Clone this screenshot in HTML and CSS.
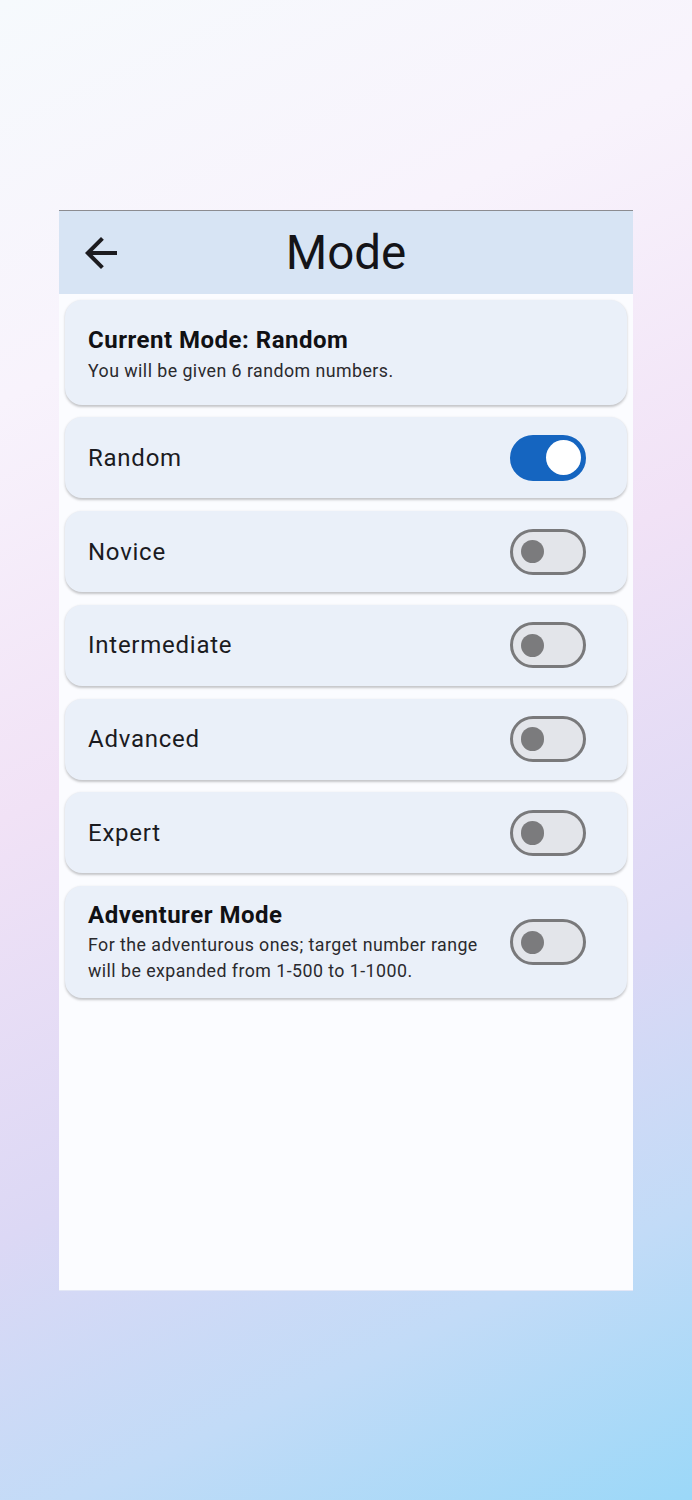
FILE: index.html
```html
<!DOCTYPE html>
<html lang="en">
<head>
<meta charset="utf-8">
<title>Mode</title>
<link rel="stylesheet" href="styles.css">
</head>
<body>
<div class="phone">
  <header class="appbar">
    <button class="back" aria-label="Back">
      <svg viewBox="0 0 24 24" width="48" height="48"><path d="M20 11H7.83l5.59-5.59L12 4l-8 8 8 8 1.41-1.41L7.83 13H20v-2z" fill="#1c1b1f"/></svg>
    </button>
    <h1 class="title">Mode</h1>
    <span></span>
  </header>
  <main class="list">
    <section class="card current">
      <div class="card-title">Current Mode: Random</div>
      <div class="card-sub">You will be given 6 random numbers.</div>
    </section>
    <section class="card row">
      <span class="label">Random</span>
      <span class="switch on"><span class="thumb"></span></span>
    </section>
    <section class="card row">
      <span class="label">Novice</span>
      <span class="switch"><span class="thumb"></span></span>
    </section>
    <section class="card row">
      <span class="label">Intermediate</span>
      <span class="switch"><span class="thumb"></span></span>
    </section>
    <section class="card row">
      <span class="label">Advanced</span>
      <span class="switch"><span class="thumb"></span></span>
    </section>
    <section class="card row">
      <span class="label">Expert</span>
      <span class="switch"><span class="thumb"></span></span>
    </section>
    <section class="card row adv">
      <div class="adv-text">
        <div class="card-title">Adventurer Mode</div>
        <div class="card-sub">For the adventurous ones; target number range will be expanded from 1-500 to 1-1000.</div>
      </div>
      <span class="switch"><span class="thumb"></span></span>
    </section>
  </main>
</div>
</body>
</html>
```
FILE: styles.css
```css
html, body {
  margin: 0;
  padding: 0;
}
body {
  width: 692px;
  min-height: 1500px;
  background: linear-gradient(155deg, #f6fafd 0%, #f8f3fc 22%, #f1e2f6 45%, #dcd8f5 68%, #c2dbf7 84%, #9bd8f8 100%);
  font-family: Roboto, "Noto Sans", sans-serif;
  color: #1b1b1f;
  overflow: hidden;
}
.phone {
  width: 574px;
  height: 1079px;
  margin: 210px auto 0;
  background: #fbfcff;
  border-top: 1px solid #8c8c90;
  box-shadow: 0 1px 0 0 #e3e7f6;
  display: flex;
  flex-direction: column;
}
.appbar {
  height: 83px;
  background: #d7e4f4;
  display: grid;
  grid-template-columns: 1fr auto 1fr;
  align-items: center;
  padding-left: 18px;
  padding-right: 18px;
}
.back {
  width: 48px;
  height: 48px;
  padding: 0;
  border: 0;
  background: none;
  display: flex;
  justify-self: start;
}
.title {
  margin: 0;
  font-weight: 400;
  font-size: 47.5px;
  line-height: 56px;
  color: #141418;
}
.list {
  padding: 6px 6px;
  display: flex;
  flex-direction: column;
  gap: 12.8px;
}
.card {
  background: #eaf0f9;
  border-radius: 17px;
  box-shadow: 0 1.5px 2.5px rgba(0, 0, 0, 0.22);
}
.current {
  height: 104.5px;
  box-sizing: border-box;
  padding: 25px 23px 0;
}
.card-title {
  font-weight: 700;
  font-size: 24px;
  line-height: 30px;
  letter-spacing: 0.5px;
  color: #111114;
}
.card-sub {
  font-size: 17.8px;
  line-height: 26px;
  letter-spacing: 0.45px;
  color: #2a2a2e;
  margin-top: 3px;
}
.row {
  height: 81px;
  box-sizing: border-box;
  display: flex;
  align-items: center;
  justify-content: space-between;
  padding: 0 41px 0 23px;
}
.label {
  font-size: 24px;
  letter-spacing: 0.75px;
  color: #1b1b1f;
}
.adv {
  height: 112px;
}
.adv-text {
  width: 405px;
  padding-top: 0;
}
.adv .card-sub {
  margin-top: 2px;
}
.switch {
  width: 76px;
  height: 46px;
  box-sizing: border-box;
  border-radius: 23px;
  border: 3px solid #79797b;
  background: #e3e5ea;
  display: flex;
  align-items: center;
  padding-left: 8px;
  flex-shrink: 0;
}
.switch .thumb {
  width: 23.4px;
  height: 23.4px;
  border-radius: 50%;
  background: #7b7b7d;
}
.switch.on {
  border-color: #1565c0;
  background: #1565c0;
  justify-content: flex-end;
  padding-left: 0;
  padding-right: 2.5px;
}
.switch.on .thumb {
  width: 35px;
  height: 35px;
  background: #ffffff;
}
```
